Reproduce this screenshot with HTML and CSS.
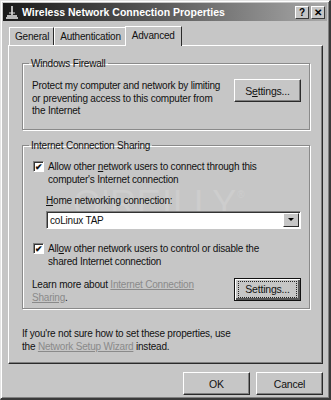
FILE: index.html
```html
<!DOCTYPE html>
<html lang="en">
<head>
    <meta charset="UTF-8">
    <title>Wireless Network Connection Properties</title>
    <link rel="stylesheet" href="styles.css">
</head>
<body>
    <div class="window">
        <div class="titlebar">
            <svg class="title-icon" width="14" height="14" viewBox="0 0 14 14">
                <path d="M7 1 V10 M2 11 H12 M1 13 H13" stroke="#eee" stroke-width="1.5" fill="none"/>
                <path d="M4 8 H10" stroke="#ddd" stroke-width="1"/>
            </svg>
            <span class="title-text">Wireless Network Connection Properties</span>
            <div class="title-buttons">
                <span class="cap-btn">?</span>
                <span class="cap-btn">&#x2715;</span>
            </div>
        </div>

        <div class="tabs">
            <span class="tab">General</span>
            <span class="tab">Authentication</span>
            <span class="tab active">Advanced</span>
        </div>

        <div class="panel">
            <fieldset class="group firewall">
                <legend>Windows Firewall</legend>
                <div class="row">
                    <p class="desc">Protect my computer and network by limiting<br>or preventing access to this computer from<br>the Internet</p>
                    <button class="btn">S<u>e</u>ttings...</button>
                </div>
            </fieldset>

            <fieldset class="group ics">
                <legend>Internet Connection Sharing</legend>
                <div class="watermark">O'REILLY<sup>®</sup></div>
                <label class="check">
                    <span class="box">&#x2714;</span>
                    <span>Allow other <u>n</u>etwork users to connect through this<br>computer's Internet connection</span>
                </label>
                <div class="home">
                    <div class="home-label"><u>H</u>ome networking connection:</div>
                    <div class="select">
                        <span class="select-value">coLinux TAP</span>
                        <span class="select-arrow"></span>
                    </div>
                </div>
                <label class="check">
                    <span class="box">&#x2714;</span>
                    <span>All<u>o</u>w other network users to control or disable the<br>shared Internet connection</span>
                </label>
                <div class="row learn">
                    <p class="desc">Learn more about <a href="#">Internet Connection<br>Sharing</a>.</p>
                    <button class="btn focused"><span>Settin<u>g</u>s...</span></button>
                </div>
            </fieldset>

            <p class="hint">If you're not sure how to set these properties, use<br>the <a href="#">Network Setup Wizard</a> instead.</p>
        </div>

        <div class="footer">
            <button class="btn">OK</button>
            <button class="btn">Cancel</button>
        </div>
    </div>
</body>
</html>
```

FILE: styles.css
```css
body {
    margin: 0;
    font-family: "Liberation Sans", Arial, sans-serif;
    font-size: 10px;
    letter-spacing: -0.2px;
    color: #111;
    background: #c6c6c6;
}
.window {
    width: 331px;
    height: 400px;
    box-sizing: border-box;
    background: #c6c6c6;
    border-left: 1px solid #e4e4e4;
    border-top: 1px solid #e4e4e4;
    border-right: 2px solid #3a3a3a;
    border-bottom: 2px solid #3a3a3a;
    box-shadow: inset 1px 1px 0 #fff, inset -1px -1px 0 #808080;
    padding: 2px 2px 0 2px;
    position: relative;
}
.titlebar {
    height: 18px;
    display: flex;
    align-items: center;
    padding: 0 2px 0 2px;
    background: linear-gradient(to right, #1a1a1a 0%, #555 45%, #a8a8a8 100%);
    color: #fff;
}
.title-icon {
    margin-right: 3px;
}
.title-text {
    font-weight: bold;
    font-size: 10.5px;
    letter-spacing: 0;
    flex: 1;
}
.title-buttons {
    display: flex;
    gap: 2px;
}
.cap-btn {
    width: 14px;
    height: 13px;
    box-sizing: border-box;
    background: #c6c6c6;
    color: #000;
    font-weight: bold;
    font-size: 10px;
    line-height: 12px;
    text-align: center;
    border: 1px solid;
    border-color: #fff #3a3a3a #3a3a3a #fff;
}
.tabs {
    display: flex;
    margin: 6px 0 0 6px;
    height: 18px;
    align-items: flex-end;
    position: relative;
    z-index: 1;
}
.tab {
    padding: 2px 4px 1px 5px;
    height: 14px;
    line-height: 14px;
    border: 1px solid;
    border-color: #fff #2a2a2a transparent #fff;
    border-bottom: none;
    background: #c6c6c6;
}
.tab.active {
    height: 17px;
    padding: 1px 6px 1px 6px;
    margin-left: -1px;
    line-height: 15px;
    margin-bottom: -1px;
}
.panel {
    margin: 0 4px 0 5px;
    height: 319px;
    box-sizing: border-box;
    border: 1px solid;
    border-color: #fff #2a2a2a #2a2a2a #fff;
    box-shadow: inset -1px -1px 0 #808080;
    padding: 12px 12px 0 13px;
}
.group {
    margin: 0;
    box-sizing: border-box;
    border: 1px solid #8a8a8a;
    box-shadow: 1px 1px 0 #fff, inset 1px 1px 0 #fff;
    padding: 6px 8px 0 9px;
}
.group legend {
    padding: 0 2px;
    margin-left: -3px;
}
.row {
    display: flex;
    justify-content: space-between;
    align-items: flex-start;
}
.desc {
    margin: 0;
    line-height: 12.5px;
    white-space: nowrap;
}
.firewall {
    height: 72px;
}
.firewall .desc {
    margin-top: 5px;
}
.firewall .btn {
    margin-top: 4px;
}
.btn {
    font-family: inherit;
    font-size: 10.5px;
    letter-spacing: -0.2px;
    color: #111;
    background: #c6c6c6;
    width: 67px;
    height: 23px;
    border: 1px solid;
    border-color: #fff #2a2a2a #2a2a2a #fff;
    box-shadow: inset -1px -1px 0 #808080;
    padding: 0;
}
.btn.focused {
    border: 1px solid #111;
    box-shadow: inset 1px 1px 0 #fff, inset -2px -2px 0 #555;
}
.btn.focused span {
    display: inline-block;
    outline: 1px dotted #222;
    outline-offset: 1px;
    width: 55px;
    line-height: 13px;
}
.ics {
    margin-top: 10px;
    height: 169px;
    padding-top: 10px;
    position: relative;
}
.watermark {
    position: absolute;
    left: 50px;
    top: 26px;
    font-size: 36px;
    line-height: 36px;
    letter-spacing: 1px;
    color: #cdcdcd;
    pointer-events: none;
}
.watermark sup {
    font-size: 10px;
    vertical-align: 18px;
}
.check {
    display: flex;
    gap: 4px;
    line-height: 12.5px;
    white-space: nowrap;
    position: relative;
}
.box {
    width: 11px;
    height: 11px;
    flex: none;
    box-sizing: border-box;
    background: #fff;
    border: 1px solid;
    border-color: #808080 #fff #fff #808080;
    box-shadow: inset 1px 1px 0 #333;
    font-size: 9px;
    line-height: 10px;
    text-align: center;
    font-weight: bold;
    margin-left: 1px;
}
.home {
    margin: 9px 0 14px 14px;
    position: relative;
}
.home-label {
    margin-bottom: 5px;
}
.select {
    height: 18px;
    box-sizing: border-box;
    display: flex;
    align-items: center;
    background: #fff;
    border: 1px solid;
    border-color: #808080 #fff #fff #808080;
    box-shadow: inset 1px 1px 0 #333;
    padding-left: 3px;
}
.select-value {
    flex: 1;
}
.select-arrow {
    width: 16px;
    height: 14px;
    box-sizing: border-box;
    margin-right: 1px;
    background: #c6c6c6;
    border: 1px solid;
    border-color: #fff #2a2a2a #2a2a2a #fff;
    position: relative;
}
.select-arrow::after {
    content: "";
    position: absolute;
    left: 4px;
    top: 4px;
    border-left: 3px solid transparent;
    border-right: 3px solid transparent;
    border-top: 3px solid #000;
}
.learn {
    margin-top: 10px;
}
.learn .desc {
    margin-top: 1px;
}
a {
    color: #8a8a8a;
    text-decoration: underline;
}
.hint {
    margin: 19px 0 0 0;
    line-height: 12.5px;
}
.footer {
    display: flex;
    justify-content: flex-end;
    gap: 6px;
    padding: 8px 4px 0 0;
}
```
